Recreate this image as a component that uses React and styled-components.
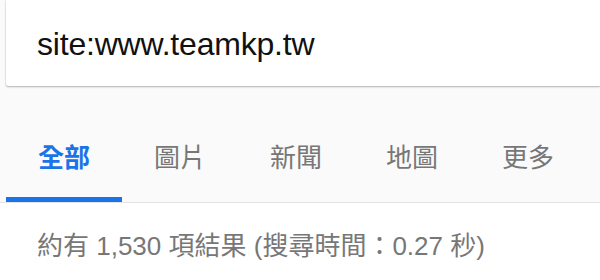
import React from 'react';
import styled, { createGlobalStyle } from 'styled-components';

const GlobalStyle = createGlobalStyle`
  html, body {
    margin: 0;
    padding: 0;
    background: #fafafa;
    font-family: "Liberation Sans", Arial, "Noto Sans CJK TC", sans-serif;
  }
`;

const Page = styled.div`
  width: 600px;
  height: 280px;
  overflow: hidden;
  display: flex;
  flex-direction: column;
`;

const SearchCard = styled.div`
  margin-left: 6px;
  height: 86px;
  background: #fff;
  border-bottom-left-radius: 2px;
  box-shadow: 0 1px 2px rgba(0, 0, 0, 0.28), 0 0 1px rgba(0, 0, 0, 0.2);
  display: flex;
  align-items: center;
  padding-left: 31px;
  padding-top: 2px;
  box-sizing: border-box;
  font-size: 32px;
  letter-spacing: -0.2px;
  color: #111;
`;

const TabBar = styled.div`
  display: flex;
  padding-left: 6px;
  margin-top: 30px;
  border-bottom: 1px solid #e4e4e4;
`;

const Tab = styled.div`
  width: 116px;
  height: 86px;
  box-sizing: border-box;
  display: flex;
  justify-content: center;
  padding-top: 21px;
  font-family: "Noto Sans CJK TC", sans-serif;
  font-size: 26px;
  font-weight: ${(p) => (p.$active ? 700 : 400)};
  color: ${(p) => (p.$active ? '#1a73e8' : '#777')};
  border-bottom: 5px solid ${(p) => (p.$active ? '#1a73e8' : 'transparent')};
`;

const Results = styled.div`
  flex: 1;
  background: #fff;
  padding: 22px 0 0 37px;
  font-family: "Liberation Sans", Arial, "Noto Sans CJK TC", sans-serif;
  font-size: 26px;
  color: #777;
`;

const tabs = ['全部', '圖片', '新聞', '地圖', '更多'];

export default function App() {
  return (
    <Page>
      <GlobalStyle />
      <SearchCard>site:www.teamkp.tw</SearchCard>
      <TabBar>
        {tabs.map((t, i) => (
          <Tab key={t} $active={i === 0}>
            {t}
          </Tab>
        ))}
      </TabBar>
      <Results>約有 1,530 項結果 (搜尋時間：0.27 秒)</Results>
    </Page>
  );
}
